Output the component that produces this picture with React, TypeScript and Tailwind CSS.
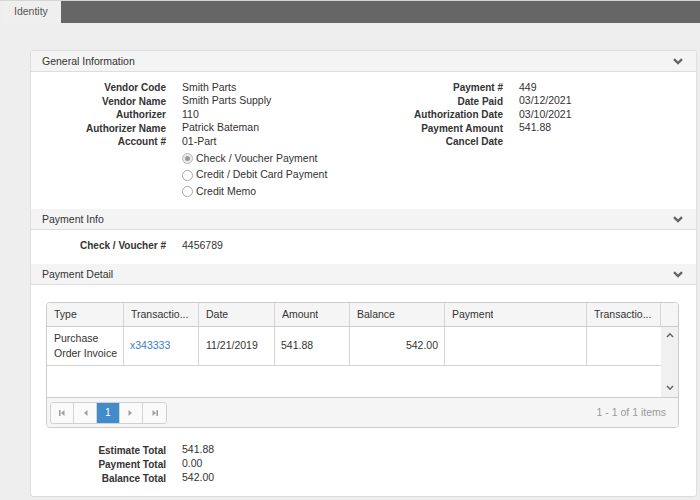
import React from 'react';

const font = "font-['Liberation_Sans',Arial,Helvetica,sans-serif]";

const Chevron = () => (
  <svg width="10" height="7" viewBox="0 0 10 7">
    <polyline points="1,1.2 5,5 9,1.2" fill="none" stroke="#666" strokeWidth="2.4" />
  </svg>
);

const SectionHeader: React.FC<{ title: string }> = ({ title }) => (
  <div className="h-[21px] bg-[#f4f4f4] border-b border-[#dddddd] flex items-center justify-between pl-[11px] pr-[13px] pt-[1px]">
    <span className="text-[10.5px] text-[#333]">{title}</span>
    <Chevron />
  </div>
);

const Field: React.FC<{ label: string; value?: string; labelW: string }> = ({ label, value, labelW }) => (
  <div className="flex h-[13.5px] items-center">
    <div className={`${labelW} text-right text-[10px] font-bold text-[#333] shrink-0`}>{label}</div>
    <div className="ml-4 text-[10.5px] text-[#333]">{value}</div>
  </div>
);

const Radio: React.FC<{ label: string; checked?: boolean }> = ({ label, checked }) => (
  <div className="flex h-[16.5px] items-center">
    <div
      className={`w-[11px] h-[11px] rounded-full border flex items-center justify-center ${
        checked ? 'border-[#b5b5b5] bg-[#ececec]' : 'border-[#a8a8a8] bg-white'
      }`}
    >
      {checked && <div className="w-[5px] h-[5px] rounded-full bg-[#9a9a9a]" />}
    </div>
    <span className="ml-[3px] text-[10.5px] text-[#333]">{label}</span>
  </div>
);

const cols = [
  { name: 'Type', w: 'w-[77px]' },
  { name: 'Transactio...', w: 'w-[75px]' },
  { name: 'Date', w: 'w-[76px]' },
  { name: 'Amount', w: 'w-[75px]' },
  { name: 'Balance', w: 'w-[95px]' },
  { name: 'Payment', w: 'w-[142px]' },
  { name: 'Transactio...', w: 'w-[74px]' },
];

const Tri: React.FC<{ dir: 'l' | 'r'; bar?: boolean }> = ({ dir, bar }) => (
  <svg width="10" height="10" viewBox="0 0 10 10">
    {dir === 'l' ? (
      <>
        {bar && <rect x="2" y="2" width="1.6" height="6" fill="#a0a0a0" />}
        <polygon points="7.5,2 7.5,8 4,5" fill="#a0a0a0" />
      </>
    ) : (
      <>
        <polygon points="2.5,2 2.5,8 6,5" fill="#a0a0a0" />
        {bar && <rect x="6.4" y="2" width="1.6" height="6" fill="#a0a0a0" />}
      </>
    )}
  </svg>
);

const PagerBtn: React.FC<{ children: React.ReactNode; active?: boolean; last?: boolean }> = ({ children, active, last }) => (
  <div
    className={`w-[23px] h-full flex items-center justify-center ${last ? '' : 'border-r border-[#d5d5d5]'} ${
      active ? 'bg-[#428bca] text-white' : 'bg-[#fafafa]'
    }`}
  >
    {children}
  </div>
);

const Total: React.FC<{ label: string; value: string }> = ({ label, value }) => (
  <div className="flex h-[14px] items-center">
    <div className="w-[135px] text-right text-[10px] font-bold text-[#333]">{label}</div>
    <div className="ml-4 text-[10.5px] text-[#333]">{value}</div>
  </div>
);

export default function App() {
  return (
    <div className={`${font} w-[700px] h-[500px] bg-[#eeeeee] overflow-hidden`}>
      <div className="h-[23px] flex border-t border-[#d6d6d6] pl-[2px]">
        <div className="w-[59px] bg-[#efefef] pl-[12px] flex items-center text-[10.5px] text-[#555]">Identity</div>
        <div className="flex-1 bg-[#666666]" />
      </div>

      <div className="pl-[30px] pr-[3px] pt-[27px]">
        <div className="bg-white border border-[#dddddd] rounded-[3px] overflow-hidden">
          <SectionHeader title="General Information" />
          <div className="pt-[9px] pb-[9px] flex">
            <div className="w-[333px]">
              <Field labelW="w-[135px]" label="Vendor Code" value="Smith Parts" />
              <Field labelW="w-[135px]" label="Vendor Name" value="Smith Parts Supply" />
              <Field labelW="w-[135px]" label="Authorizer" value="110" />
              <Field labelW="w-[135px]" label="Authorizer Name" value="Patrick Bateman" />
              <Field labelW="w-[135px]" label="Account #" value="01-Part" />
              <div className="pl-[151px] pt-[2px]">
                <Radio label="Check / Voucher Payment" checked />
                <Radio label="Credit / Debit Card Payment" />
                <Radio label="Credit Memo" />
              </div>
            </div>
            <div className="flex-1">
              <Field labelW="w-[139px]" label="Payment #" value="449" />
              <Field labelW="w-[139px]" label="Date Paid" value="03/12/2021" />
              <Field labelW="w-[139px]" label="Authorization Date" value="03/10/2021" />
              <Field labelW="w-[139px]" label="Payment Amount" value="541.88" />
              <Field labelW="w-[139px]" label="Cancel Date" value="" />
            </div>
          </div>

          <SectionHeader title="Payment Info" />
          <div className="pt-[9px] pb-[11.5px]">
            <Field labelW="w-[135px]" label="Check / Voucher #" value="4456789" />
          </div>

          <SectionHeader title="Payment Detail" />
          <div className="pt-[17px] pl-[15px] pr-[17px] pb-[11px]">
            <div className="border border-[#cccccc] rounded-[4px] overflow-hidden text-[10.5px] text-[#333]">
              <div className="h-[24px] flex bg-[#f5f5f5] border-b border-[#cccccc]">
                {cols.map((c, i) => (
                  <div key={i} className={`${c.w} shrink-0 border-r border-[#d5d5d5] pl-[7px] pr-[4px] flex items-center`}>
                    <span className="truncate">{c.name}</span>
                  </div>
                ))}
                <div className="flex-1" />
              </div>

              <div className="flex border-b border-[#cccccc]">
                <div className="flex-1">
                  <div className="h-[39px] flex border-b border-[#d5d5d5]">
                    <div className="w-[77px] shrink-0 border-r border-[#d5d5d5] pl-[7px] flex flex-col justify-center leading-[15px]">
                      <span>Purchase</span>
                      <span>Order Invoice</span>
                    </div>
                    <div className="w-[75px] shrink-0 border-r border-[#d5d5d5] pl-[6px] flex items-center text-[#3a7fc1]">x343333</div>
                    <div className="w-[76px] shrink-0 border-r border-[#d5d5d5] pl-[7px] flex items-center">11/21/2019</div>
                    <div className="w-[75px] shrink-0 border-r border-[#d5d5d5] pl-[6px] flex items-center">541.88</div>
                    <div className="w-[95px] shrink-0 border-r border-[#d5d5d5] pr-[6px] flex items-center justify-end">542.00</div>
                    <div className="w-[142px] shrink-0 border-r border-[#d5d5d5]" />
                    <div className="w-[74px] shrink-0" />
                  </div>
                  <div className="h-[31px]" />
                </div>
                <div className="w-[17px] bg-[#f0f0f0] flex flex-col items-center justify-between pt-[5px] pb-[6px]">
                  <svg width="8" height="6" viewBox="0 0 8 6">
                    <polyline points="1,5 4,1.8 7,5" fill="none" stroke="#666" strokeWidth="1.6" />
                  </svg>
                  <svg width="8" height="6" viewBox="0 0 8 6">
                    <polyline points="1,1 4,4.2 7,1" fill="none" stroke="#666" strokeWidth="1.6" />
                  </svg>
                </div>
              </div>

              <div className="h-[29px] bg-[#f5f5f5] flex items-center justify-between pl-[3px] pr-[12px]">
                <div className="h-[22px] flex border border-[#d0d0d0] rounded-[3px] overflow-hidden">
                  <PagerBtn><Tri dir="l" bar /></PagerBtn>
                  <PagerBtn><Tri dir="l" /></PagerBtn>
                  <PagerBtn active>1</PagerBtn>
                  <PagerBtn><Tri dir="r" /></PagerBtn>
                  <PagerBtn last><Tri dir="r" bar /></PagerBtn>
                </div>
                <span className="text-[#9a9a9a]">1 - 1 of 1 items</span>
              </div>
            </div>

            <div className="mt-[15px] -ml-[15px]">
              <Total label="Estimate Total" value="541.88" />
              <Total label="Payment Total" value="0.00" />
              <Total label="Balance Total" value="542.00" />
            </div>
          </div>
        </div>
      </div>
    </div>
  );
}
